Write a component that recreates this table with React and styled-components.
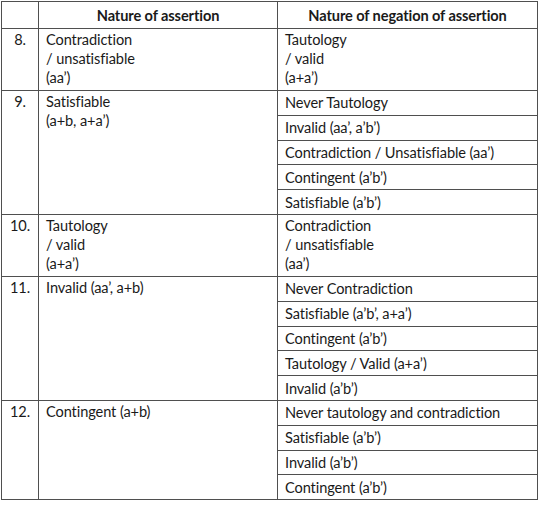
import React from "react";
import styled, { createGlobalStyle } from "styled-components";

const Global = createGlobalStyle`
  body {
    margin: 0;
    background: #fff;
  }
`;

const Page = styled.div`
  padding: 1px 0 0 1px;
  font-family: Lato, "Open Sans", sans-serif;
  font-size: 14.6px;
  letter-spacing: -0.1px;
  font-variant-ligatures: none;
  color: #1a1a1a;
`;

const Table = styled.table`
  border-collapse: collapse;
  width: 537px;
  table-layout: fixed;
  line-height: 19px;
`;

const Row = styled.tr`
  height: ${(p) => p.$h}px;
`;

const Head = styled.th`
  border: 1px solid #4f4f4f;
  font-weight: 700;
  text-align: center;
  padding: 0 6px;
`;

const Num = styled.td`
  border: 1px solid #4f4f4f;
  text-align: center;
  vertical-align: top;
  padding: 1px 0 0;
`;

const Cell = styled.td`
  border: 1px solid #4f4f4f;
  vertical-align: ${(p) => (p.$top ? "top" : "middle")};
  padding: ${(p) => (p.$top ? "1px 7px 0" : "0 7px")};
`;

const groups = [
  {
    n: "8.",
    left: ["Contradiction", "/ unsatisfiable", "(aa’)"],
    right: [["Tautology", "/ valid", "(a+a’)"]],
  },
  {
    n: "9.",
    left: ["Satisfiable", "(a+b, a+a’)"],
    right: [
      ["Never Tautology"],
      ["Invalid (aa’, a’b’)"],
      ["Contradiction / Unsatisfiable (aa’)"],
      ["Contingent (a’b’)"],
      ["Satisfiable (a’b’)"],
    ],
  },
  {
    n: "10.",
    left: ["Tautology", "/ valid", "(a+a’)"],
    right: [["Contradiction", "/ unsatisfiable", "(aa’)"]],
  },
  {
    n: "11.",
    left: ["Invalid (aa’, a+b)"],
    right: [
      ["Never Contradiction"],
      ["Satisfiable (a’b’, a+a’)"],
      ["Contingent (a’b’)"],
      ["Tautology / Valid (a+a’)"],
      ["Invalid (a’b’)"],
    ],
  },
  {
    n: "12.",
    left: ["Contingent (a+b)"],
    right: [
      ["Never tautology and contradiction"],
      ["Satisfiable (a’b’)"],
      ["Invalid (a’b’)"],
      ["Contingent (a’b’)"],
    ],
  },
];

const lines = (arr) =>
  arr.map((t, i) => (
    <React.Fragment key={i}>
      {i > 0 && <br />}
      {t}
    </React.Fragment>
  ));

export default function App() {
  return (
    <Page>
      <Global />
      <Table>
        <colgroup>
          <col style={{ width: 37 }} />
          <col style={{ width: 239 }} />
          <col style={{ width: 260 }} />
        </colgroup>
        <tbody>
          <Row $h={27}>
            <Head />
            <Head>Nature of assertion</Head>
            <Head>Nature of negation of assertion</Head>
          </Row>
          {groups.map((g) =>
            g.right.map((r, i) => {
              const multi = r.length > 1;
              return (
                <Row key={g.n + i} $h={multi ? 62 : 24.8}>
                  {i === 0 && (
                    <>
                      <Num rowSpan={g.right.length}>{g.n}</Num>
                      <Cell $top rowSpan={g.right.length}>
                        {lines(g.left)}
                      </Cell>
                    </>
                  )}
                  <Cell $top={multi}>{lines(r)}</Cell>
                </Row>
              );
            })
          )}
        </tbody>
      </Table>
    </Page>
  );
}
